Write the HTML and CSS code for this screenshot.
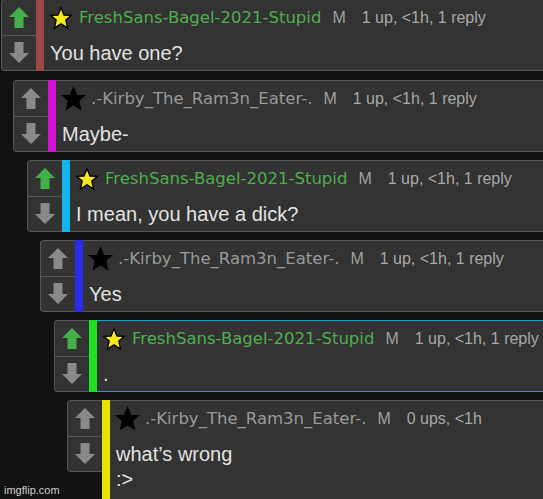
FILE: index.html
```html
<!DOCTYPE html>
<html>
  <head>
    <title>Comments</title>
    <meta name="viewport" content="width=device-width, initial-scale=1.0" />
    <link rel="stylesheet" href="styles.css">
  </head>
  <body>
    <svg width="0" height="0" class="defs">
      <defs>
        <path id="arrow-up" d="M10 0 L20 10 L14.5 10 L14.5 21 L5.5 21 L5.5 10 L0 10 Z" />
      </defs>
    </svg>

    <ul class="thread">
      <li class="comment d0">
        <div class="votes">
          <div class="vote"><svg class="arrow up-on" viewBox="0 0 20 21"><use href="#arrow-up" /></svg></div>
          <div class="vote"><svg class="arrow down" viewBox="0 0 20 21"><use href="#arrow-up" /></svg></div>
        </div>
        <div class="post">
          <div class="bar bar-red"></div>
          <div class="body">
            <div class="head">
              <svg class="star star-gold" width="22" height="22" viewBox="0 0 22 22"><path d="M11 0.8 L14 8 L21.4 8.3 L15.8 13 L17.6 21 L11 16.8 L4.4 21 L6.2 13 L0.6 8.3 L8 8 Z" /></svg>
              <span class="user user-green">FreshSans-Bagel-2021-Stupid</span>
              <span class="mod">M</span>
              <span class="meta">1 up, &lt;1h, 1 reply</span>
            </div>
            <p class="text">You have one?</p>
          </div>
        </div>
      </li>

      <li class="comment d1">
        <div class="votes">
          <div class="vote"><svg class="arrow" viewBox="0 0 20 21"><use href="#arrow-up" /></svg></div>
          <div class="vote"><svg class="arrow down" viewBox="0 0 20 21"><use href="#arrow-up" /></svg></div>
        </div>
        <div class="post">
          <div class="bar bar-magenta"></div>
          <div class="body">
            <div class="head">
              <svg class="star star-black" width="22" height="22" viewBox="0 0 22 22"><path d="M11 0.8 L14 8 L21.4 8.3 L15.8 13 L17.6 21 L11 16.8 L4.4 21 L6.2 13 L0.6 8.3 L8 8 Z" /></svg>
              <span class="user">.-Kirby_The_Ram3n_Eater-.</span>
              <span class="mod">M</span>
              <span class="meta">1 up, &lt;1h, 1 reply</span>
            </div>
            <p class="text">Maybe-</p>
          </div>
        </div>
      </li>

      <li class="comment d2">
        <div class="votes">
          <div class="vote"><svg class="arrow up-on" viewBox="0 0 20 21"><use href="#arrow-up" /></svg></div>
          <div class="vote"><svg class="arrow down" viewBox="0 0 20 21"><use href="#arrow-up" /></svg></div>
        </div>
        <div class="post">
          <div class="bar bar-cyan"></div>
          <div class="body">
            <div class="head">
              <svg class="star star-gold" width="22" height="22" viewBox="0 0 22 22"><path d="M11 0.8 L14 8 L21.4 8.3 L15.8 13 L17.6 21 L11 16.8 L4.4 21 L6.2 13 L0.6 8.3 L8 8 Z" /></svg>
              <span class="user user-green">FreshSans-Bagel-2021-Stupid</span>
              <span class="mod">M</span>
              <span class="meta">1 up, &lt;1h, 1 reply</span>
            </div>
            <p class="text">I mean, you have a dick?</p>
          </div>
        </div>
      </li>

      <li class="comment d3">
        <div class="votes">
          <div class="vote"><svg class="arrow" viewBox="0 0 20 21"><use href="#arrow-up" /></svg></div>
          <div class="vote"><svg class="arrow down" viewBox="0 0 20 21"><use href="#arrow-up" /></svg></div>
        </div>
        <div class="post">
          <div class="bar bar-blue"></div>
          <div class="body">
            <div class="head">
              <svg class="star star-black" width="22" height="22" viewBox="0 0 22 22"><path d="M11 0.8 L14 8 L21.4 8.3 L15.8 13 L17.6 21 L11 16.8 L4.4 21 L6.2 13 L0.6 8.3 L8 8 Z" /></svg>
              <span class="user">.-Kirby_The_Ram3n_Eater-.</span>
              <span class="mod">M</span>
              <span class="meta">1 up, &lt;1h, 1 reply</span>
            </div>
            <p class="text">Yes</p>
          </div>
        </div>
      </li>

      <li class="comment d4 selected">
        <div class="votes">
          <div class="vote"><svg class="arrow up-on" viewBox="0 0 20 21"><use href="#arrow-up" /></svg></div>
          <div class="vote"><svg class="arrow down" viewBox="0 0 20 21"><use href="#arrow-up" /></svg></div>
        </div>
        <div class="post">
          <div class="bar bar-green"></div>
          <div class="body">
            <div class="head">
              <svg class="star star-gold" width="22" height="22" viewBox="0 0 22 22"><path d="M11 0.8 L14 8 L21.4 8.3 L15.8 13 L17.6 21 L11 16.8 L4.4 21 L6.2 13 L0.6 8.3 L8 8 Z" /></svg>
              <span class="user user-green">FreshSans-Bagel-2021-Stupid</span>
              <span class="mod">M</span>
              <span class="meta">1 up, &lt;1h, 1 reply</span>
            </div>
            <p class="text">.</p>
          </div>
        </div>
      </li>

      <li class="comment d5">
        <div class="votes">
          <div class="vote"><svg class="arrow" viewBox="0 0 20 21"><use href="#arrow-up" /></svg></div>
          <div class="vote"><svg class="arrow down" viewBox="0 0 20 21"><use href="#arrow-up" /></svg></div>
        </div>
        <div class="post">
          <div class="bar bar-yellow"></div>
          <div class="body">
            <div class="head">
              <svg class="star star-black" width="22" height="22" viewBox="0 0 22 22"><path d="M11 0.8 L14 8 L21.4 8.3 L15.8 13 L17.6 21 L11 16.8 L4.4 21 L6.2 13 L0.6 8.3 L8 8 Z" /></svg>
              <span class="user">.-Kirby_The_Ram3n_Eater-.</span>
              <span class="mod">M</span>
              <span class="meta">0 ups, &lt;1h</span>
            </div>
            <p class="text">what’s wrong<br>:&gt;</p>
          </div>
        </div>
      </li>
    </ul>

    <div class="watermark">imgflip.com</div>
  </body>
</html>
```

FILE: styles.css
```css
html,
body {
  margin: 0;
  height: 100%;
  overflow: hidden;
  background: #121212;
}
body {
  position: relative;
  font-family: "Liberation Sans", Arial, sans-serif;
}
.defs {
  position: absolute;
}

.thread {
  list-style: none;
  margin: 0;
  padding: 0;
  width: 543px;
  overflow: hidden;
}

.comment {
  display: flex;
  height: 72px;
  width: 620px;
  margin-bottom: 8px;
}
.d0 { margin-left: 1px; margin-top: -1px; }
.d1 { margin-left: 13px; margin-top: 9px; }
.d2 { margin-left: 27px; }
.d3 { margin-left: 40px; }
.d4 { margin-left: 54px; }
.d5 { margin-left: 67px; height: 99px; margin-bottom: 0; }
.d5 .post { border-bottom: 0; }
.d5 .votes { height: 72px; }

.votes {
  width: 35px;
  flex: none;
  display: flex;
  flex-direction: column;
  box-sizing: border-box;
  border: 1px solid #575757;
  border-right: 0;
  border-radius: 4px 0 0 4px;
  background: #333;
}
.vote {
  flex: 1;
  display: flex;
  align-items: center;
  justify-content: center;
}
.vote + .vote {
  border-top: 1px solid #575757;
}
.arrow {
  width: 20px;
  height: 21px;
  fill: #8a8a8a;
}
.arrow.up-on {
  fill: #45b04b;
}
.arrow.down {
  transform: rotate(180deg);
}

.post {
  flex: 1;
  display: flex;
  background: #333;
  border: 1px solid #575757;
  border-left: 0;
}
.selected .post {
  border-color: #1f9bd0;
}

.bar {
  width: 8px;
  flex: none;
  margin: -1px 0;
}
.bar-red { background: #9c4848; }
.bar-magenta { background: #d414d4; }
.bar-cyan { background: #14b4ec; }
.bar-blue { background: #2a2ee8; }
.bar-green { background: #22e022; }
.bar-yellow { background: #e8e400; }

.body {
  flex: 1;
  padding-left: 6px;
}
.head {
  height: 35px;
  display: flex;
  align-items: center;
  white-space: nowrap;
}
.star {
  flex: none;
  width: 22px;
  height: 22px;
  margin-right: 7px;
  stroke: #000;
  stroke-width: 1.3;
  overflow: visible;
}
.star-gold { fill: #f7e81e; }
.star-black {
  fill: #000;
  width: 23px;
  height: 23px;
  margin-right: 6px;
}

.user {
  font-family: "DejaVu Sans", Verdana, sans-serif;
  font-size: 16.5px;
  color: #9a9a9a;
}
.user-green {
  color: #4fb04f;
}
.mod {
  font-size: 16px;
  color: #a0a0a0;
  margin-left: 11px;
}
.meta {
  font-size: 16px;
  color: #a8a8a8;
  margin-left: 16px;
}

.text {
  margin: 6px 0 0;
  font-size: 20px;
  line-height: 25px;
  color: #e2e2e2;
}

.watermark {
  position: absolute;
  left: 4px;
  bottom: 3px;
  font-size: 11px;
  color: #cfcfcf;
}
```
